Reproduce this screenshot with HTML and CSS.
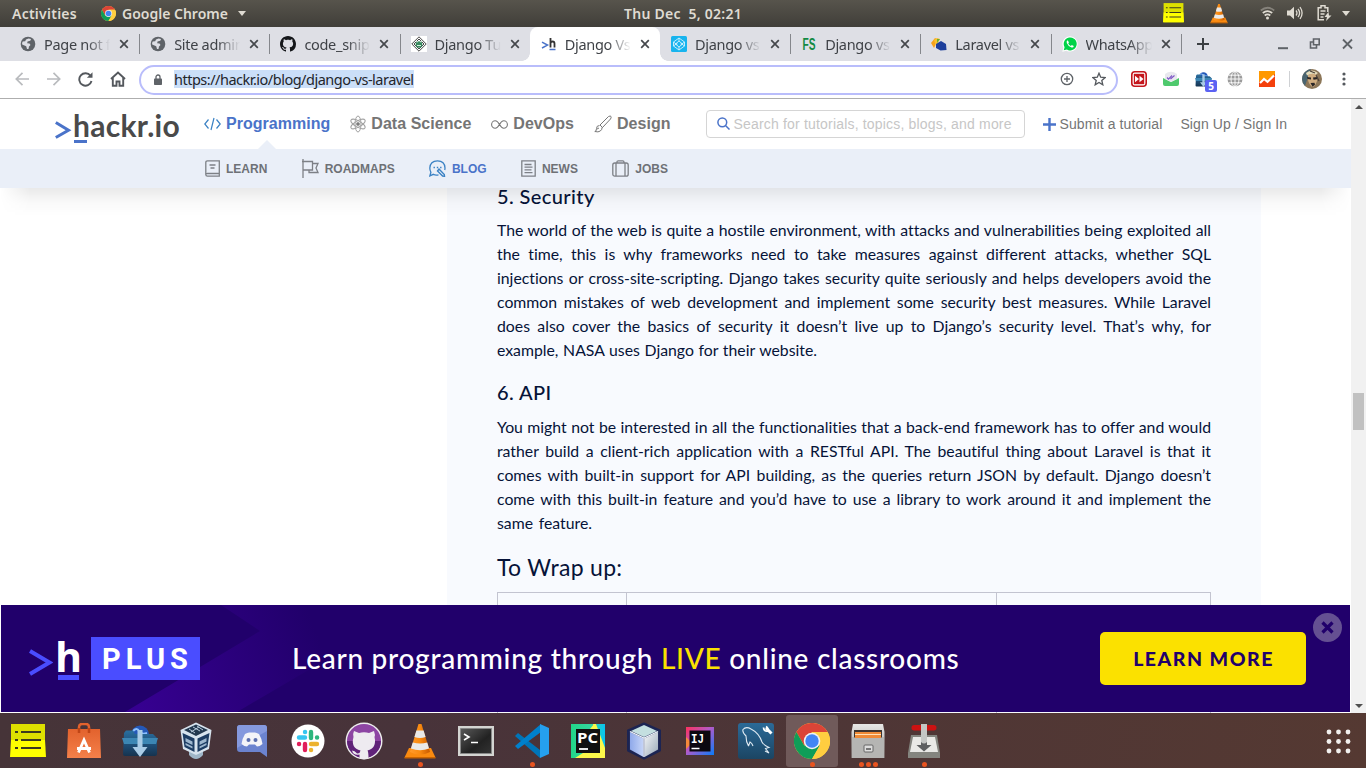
FILE: index.html
```html
<!DOCTYPE html>
<html lang="en">
<head>
<meta charset="utf-8">
<title>Django Vs Laravel</title>
<link rel="stylesheet" href="styles.css">
</head>
<body>
<svg class="defs" width="0" height="0">
  <defs>
    <linearGradient id="cone" x1="0" x2="1"><stop offset="0" stop-color="#ff9a2c"/><stop offset=".5" stop-color="#f98a10"/><stop offset="1" stop-color="#c85a00"/></linearGradient>
    <linearGradient id="grey" x1="0" x2="0" y1="0" y2="1"><stop offset="0" stop-color="#e8e8e6"/><stop offset="1" stop-color="#9a9a98"/></linearGradient>
    <linearGradient id="dark" x1="0" x2="1" y1="0" y2="1"><stop offset="0" stop-color="#5a5a5a"/><stop offset=".6" stop-color="#222"/><stop offset="1" stop-color="#333"/></linearGradient>
    <linearGradient id="orange" x1="0" x2="0" y1="0" y2="1"><stop offset="0" stop-color="#e2622d"/><stop offset="1" stop-color="#f5804a"/></linearGradient>
    <linearGradient id="folder" x1="0" x2="0" y1="0" y2="1"><stop offset="0" stop-color="#2a6f9f"/><stop offset=".6" stop-color="#1d4b74"/><stop offset="1" stop-color="#16334f"/></linearGradient>
    <linearGradient id="mysql" x1="0" x2="0" y1="0" y2="1"><stop offset="0" stop-color="#2b6a98"/><stop offset="1" stop-color="#1b4563"/></linearGradient>
    <linearGradient id="pyc" x1="0" x2="1"><stop offset="0" stop-color="#21d789"/><stop offset=".6" stop-color="#35d6a0"/><stop offset="1" stop-color="#07c3f2"/></linearGradient>
    <linearGradient id="ij" x1="0" x2="1" y1="0" y2="1"><stop offset="0" stop-color="#fe315d"/><stop offset=".45" stop-color="#b45ac8"/><stop offset="1" stop-color="#087cfa"/></linearGradient>
    <linearGradient id="cubeL" x1="0" x2="1"><stop offset="0" stop-color="#8fa9ea"/><stop offset="1" stop-color="#c6d5f8"/></linearGradient>
    <linearGradient id="cubeR" x1="0" x2="1" y1="0" y2="1"><stop offset="0" stop-color="#f4f6f8"/><stop offset="1" stop-color="#9aa9b8"/></linearGradient>
    <symbol id="chrome" viewBox="0 0 36 36">
      <circle cx="18" cy="18" r="18" fill="#fc4"/>
      <path d="M18 9h15.600A18 18 0 0 0 2.400 9L10.200 22.500Z" fill="#db4437"/>
      <path d="M2.400 9A18 18 0 0 0 18 36L25.800 22.500H10.200Z" fill="#0f9d58"/>
      <path d="M18 36A18 18 0 0 0 33.600 9H18L25.800 22.500Z" fill="#ffcd40"/>
      <circle cx="18" cy="18" r="8.300" fill="#f1f1f1"/><circle cx="18" cy="18" r="6.700" fill="#4285f4"/>
    </symbol>
    <symbol id="vlc" viewBox="0 0 32 36">
      <path d="M5 25h22l4.500 9.500h-31z" fill="#f98a10"/><path d="M.5 34h31v1.500h-31z" fill="#c96400"/>
      <path d="M14.500 1h3L26 29q-10 5-20 0z" fill="url(#cone)"/>
      <path d="M12.400 7.500h7.200l2 6.500q-5.600 2-11.200 0zM8.700 19.500q7.300 2 14.600 0l1.800 6q-9 3.600-18.200 0z" fill="#e9e9e9"/>
    </symbol>
    <symbol id="notes" viewBox="0 0 36 34">
      <path d="M1 0h34v33H1z" fill="#dde000"/><path d="M1 16h34l1 17H0z" fill="#ff0"/>
      <path d="M5 8h3M11 8h20M5 16h3M11 16h20M5 24h3M11 24h20" stroke="#3b3a20" stroke-width="1.800"/>
    </symbol>
    <symbol id="globe" viewBox="0 0 16 16">
      <circle cx="8" cy="8" r="7.300" fill="#5f6368"/>
      <path d="M8.500 2.500l2.500.5-.7 1.800-2.800.7-.3 1.700 2.300.2 1 1.600-1.500 1.500-.5 2.500H7l-.8-2.700L2.200 8.500q-.5-1.500.5-3l2.500-.3L6 3.500z" fill="#dedfe5"/>
    </symbol>
    <symbol id="close" viewBox="0 0 10 10"><path d="M1.200 1.200l7.600 7.600M8.800 1.200L1.200 8.800" stroke="#45484c" stroke-width="1.700"/></symbol>
    <symbol id="octocat" viewBox="0 0 16 16"><path d="M8 0C3.580 0 0 3.580 0 8c0 3.540 2.290 6.530 5.470 7.590.4.070.55-.17.55-.38 0-.19-.01-.82-.01-1.490-2.010.37-2.530-.49-2.690-.94-.09-.23-.48-.94-.82-1.130-.28-.15-.68-.52-.01-.53.63-.01 1.080.58 1.230.82.72 1.210 1.870.87 2.330.66.07-.52.28-.87.51-1.070-1.780-.2-3.640-.89-3.640-3.950 0-.87.31-1.590.82-2.150-.08-.2-.36-1.020.08-2.120 0 0 .67-.21 2.200.82.64-.18 1.320-.27 2-.27s1.360.09 2 .27c1.530-1.040 2.200-.82 2.200-.82.44 1.100.16 1.920.08 2.120.51.56.82 1.270.82 2.150 0 3.070-1.870 3.750-3.650 3.950.29.25.54.73.54 1.480 0 1.070-.01 1.930-.01 2.200 0 .21.15.46.55.38A8.010 8.010 0 0 0 16 8c0-4.420-3.580-8-8-8z"/></symbol>
    <symbol id="boxfolder" viewBox="0 0 36 32">
      <circle cx="18" cy="9.500" r="9" fill="#2458b8"/><path d="M11 6q4-4 6 0t8 2" stroke="#8cc0ff" stroke-width="2" fill="none"/>
      <path d="M2 8l2-2.500h7l2 3.500h18l4 4v16q0 2-2 2H3q-2 0-2-2z" fill="url(#folder)"/>
      <path d="M0 13h36l-2 6H2z" fill="#3c86b4"/>
      <path d="M15.500 5h5v17h5L18 32l-7.500-10h5z" fill="#a9cbe6"/>
    </symbol>
  </defs>
</svg>

<header class="topbar">
  <span class="activities">Activities</span>
  <svg class="top-chrome" width="15" height="15"><use href="#chrome"/></svg>
  <span class="app-name">Google Chrome</span>
  <i class="caret"></i>
  <span class="clock">Thu Dec &nbsp;5, 02:21</span>
  <div class="tray">
    <svg class="tray-notes" width="21" height="20"><use href="#notes"/></svg>
    <svg class="tray-vlc" width="18" height="21"><use href="#vlc"/></svg>
    <svg class="tray-wifi" width="15" height="14" viewBox="0 0 15 14" fill="none" stroke-width="1.700"><path d="M.8 4.500q6.700-5.500 13.400 0" stroke="#85827b"/><path d="M2.800 7q4.700-3.800 9.400 0M4.700 9.500q2.800-2.200 5.600 0" stroke="#dfdbd2"/><circle cx="7.500" cy="12" r="1.500" fill="#dfdbd2"/></svg>
    <svg class="tray-vol" width="16" height="14" viewBox="0 0 16 14"><path d="M0 4.500h3L7 .8v12.400L3 9.500H0z" fill="#dfdbd2"/><path d="M9 4.500q2 2.500 0 5M11 2.800q3.200 4.200 0 8.400M13 1q4.200 6 0 12" stroke="#dfdbd2" stroke-width="1.300" fill="none"/></svg>
    <svg class="tray-bat" width="15" height="16" viewBox="0 0 15 16" fill="none" stroke="#dfdbd2" stroke-width="1.500"><path d="M7 14.800H1.200V2.800H4V.8h4v2h2.800V7M3.500 6h5M3.500 9h4M3.500 12h3"/><path d="M11.500 7L7.500 12h2.500l-1 4 5.500-5.500H12z" fill="#dfdbd2" stroke="none"/></svg>
    <i class="caret"></i>
  </div>
</header>

<nav class="tabs">
  <div class="tab"><svg class="fav" width="16" height="16"><use href="#globe"/></svg><span class="title">Page not found</span><svg class="x" width="10" height="10"><use href="#close"/></svg></div>
  <div class="tab"><svg class="fav" width="16" height="16"><use href="#globe"/></svg><span class="title">Site administration</span><svg class="x" width="10" height="10"><use href="#close"/></svg></div>
  <div class="tab"><svg class="fav" width="16" height="16" fill="#15171a"><use href="#octocat"/></svg><span class="title">code_snippets</span><svg class="x" width="10" height="10"><use href="#close"/></svg></div>
  <div class="tab bare"><svg class="fav" width="16" height="16" viewBox="0 0 16 16"><path fill="#fff" d="M0 0h16v16H0z"/><path d="M8 .8L15.200 8 8 15.200.8 8zM8 3l5 5-5 5-5-5z" fill="none" stroke="#333" stroke-width=".9"/><circle cx="8" cy="8.500" r="3.300" fill="#3a8a60"/><path d="M5 5l2 1M11 5l-2 1M6 9.500h4" stroke="#d8f0df"/></svg><span class="title">Django Tutorial</span><svg class="x" width="10" height="10"><use href="#close"/></svg></div>
  <div class="tab active"><svg class="fav" width="16" height="16" viewBox="0 0 16 16" fill="none"><path d="M1 6.200l5.500 2.900L1 12" stroke="#4a73c9" stroke-width="1.500"/><path d="M9.500 2v9.500M9.500 7.500q0-2 2-2t2 2v4" stroke="#333" stroke-width="1.800"/><path d="M8.500 13.500h6" stroke="#4a73c9" stroke-width="1.500"/></svg><span class="title">Django Vs Laravel</span><svg class="x" width="10" height="10"><use href="#close"/></svg></div>
  <div class="tab"><svg class="fav" width="16" height="16" viewBox="0 0 16 16"><rect width="16" height="16" rx="1.500" fill="#18b4ee"/><path d="M8 2l5.500 4v4L8 14l-5.500-4V6zM8 5l3.500 3L8 11 4.500 8zM8 2v3M8 11v3M2.500 6l4 3M13.500 6l-4 3M2.500 10l4-3M13.500 10l-4-3" fill="none" stroke="#d4f3ff" stroke-width=".9"/></svg><span class="title">Django vs Laravel</span><svg class="x" width="10" height="10"><use href="#close"/></svg></div>
  <div class="tab"><svg class="fav" width="16" height="16" viewBox="0 0 16 16"><text x="1.500" y="14" class="fs" textLength="13" lengthAdjust="spacingAndGlyphs">FS</text></svg><span class="title">Django vs Laravel</span><svg class="x" width="10" height="10"><use href="#close"/></svg></div>
  <div class="tab"><svg class="fav" width="16" height="16" viewBox="0 0 16 16"><path d="M0 7l4-5 2 1-2 7-1 2z" fill="#f6a21c"/><path d="M3 4l3-2 3 1-4 7z" fill="#fbc02d"/><path d="M6 3l3 0-3 4z" fill="#6fae2f"/><path d="M5 8l5-3 5 3 .5 6-6 .5L5 12z" fill="#1d3f9c"/></svg><span class="title">Laravel vs Django</span><svg class="x" width="10" height="10"><use href="#close"/></svg></div>
  <div class="tab"><svg class="fav" width="16" height="16" viewBox="0 0 16 16"><path d="M.3 15.700l1.100-4A7.600 7.600 0 1 1 4.500 14.700z" fill="#fff"/><path d="M1.700 14.300l.9-3.100a6.500 6.500 0 1 1 2.300 2.300z" fill="#00d348"/><path d="M5.800 4.300q-1.700.8-1 2.700 1.400 3.500 4.800 4.500 1.900.3 2.200-1.600l-2-1-.9 1q-1.900-.7-2.700-2.500l.7-.9z" fill="#fff"/></svg><span class="title">WhatsApp Web</span><svg class="x" width="10" height="10"><use href="#close"/></svg></div>
  <svg class="newtab" width="12" height="12" viewBox="0 0 12 12"><path d="M6 0v12M0 6h12" stroke="#3c4043" stroke-width="2"/></svg>
  <svg class="winctl" width="76" height="12" viewBox="0 0 76 12" fill="none" stroke="#5f6368" stroke-width="1.600"><path d="M0 10.200h10" stroke-width="2"/><path d="M35.500 1h5.700v5.700h-5.700zM35.500 4h-3v6h6V7"/><path d="M65 1.500l9 9M74 1.500l-9 9" stroke-width="1.800"/></svg>
</nav>

<div class="toolbar">
  <svg class="navicons" width="114" height="16" viewBox="0 0 114 16" fill="none" stroke-width="1.700"><path d="M15 8H2.500M8.500 1.800L2.300 8l6.200 6.200" stroke="#b9bbbe"/><path d="M33 8h12.500M39.500 1.800L45.700 8l-6.200 6.200" stroke="#b9bbbe"/><path d="M76.500 4.800A6.200 6.200 0 1 0 77.500 10" stroke="#54585d" stroke-width="1.900"/><path d="M78.500 1.200v5.600h-5.600z" fill="#54585d"/><path d="M97 8l7-6.500L111 8M98.800 7v7.700h3.700V10.500h3v4.200h3.700V7" stroke="#54585d" stroke-width="1.900"/></svg>
  <div class="omnibox">
    <svg class="lock" width="8" height="11" viewBox="0 0 8 11"><path d="M2 5V3a2 2 0 0 1 4 0v2" stroke="#5f6368" stroke-width="1.300" fill="none"/><rect y="4.500" width="8" height="6.500" rx=".8" fill="#5f6368"/></svg>
    <span class="url">https://hackr.io/blog/django-vs-laravel</span>
    <svg class="zoomicon" width="14" height="14" viewBox="0 0 14 14" fill="none" stroke="#5f6368" stroke-width="1.300"><circle cx="7" cy="7" r="5.700"/><path d="M7 4v6M4 7h6"/></svg>
    <svg class="star" width="14" height="14" viewBox="0 0 14 14" fill="none" stroke="#54585d" stroke-width="1.300"><path d="M7 1.200l1.700 4 4.400.4-3.300 2.900 1 4.300L7 10.500l-3.800 2.300 1-4.300L.9 5.600l4.400-.4z"/></svg>
  </div>
  <div class="ext">
    <svg width="16" height="16" viewBox="0 0 16 16"><rect x=".8" y=".8" width="14.400" height="14.400" rx="3" fill="#fff" stroke="#c4161c" stroke-width="1.600"/><rect x="2.800" y="2.800" width="10.400" height="10.400" fill="#c4161c"/><path d="M4 4.700L8 8l-4 3.300zM8.500 4.700L12.500 8l-4 3.300z" fill="#fff"/></svg>
    <svg width="16" height="16" viewBox="0 0 16 16"><path d="M0 7l8 4 8-4v6q0 2-2 2H2q-2 0-2-2z" fill="#4fc96d"/><path d="M2 3q6-4.500 12 0v5l-6 3-6-3z" fill="#e8e8ee"/><path d="M4 6.500l1.500 1.600L9 4.500M7.500 8L11.500 4.500" stroke="#7d55c7" stroke-width="1.100" fill="none"/></svg>
    <span class="badged"><svg width="17" height="15"><use href="#boxfolder"/></svg><b>5</b></span>
    <svg width="16" height="16" viewBox="0 0 16 16" fill="none" stroke="#fff" stroke-width=".9"><circle cx="8" cy="8" r="7.500" fill="#9b9b9b" stroke="none"/><path d="M8 0v16M0 8h16M1.500 4.200h13M1.500 11.800h13"/><ellipse cx="8" cy="8" rx="4" ry="7.500"/></svg>
    <svg width="16" height="16" viewBox="0 0 16 16"><path d="M0 0h16v16H0z" fill="#ff9800"/><path d="M0 11l4.500-4 3 2.500L16 3v13H0z" fill="#f4400c"/><path d="M1 12l4-4 3.500 2.800L15 4.500" stroke="#fff" stroke-width="2.200" fill="none"/></svg>
    <i class="sep"></i>
    <svg class="avatar" width="20" height="20" viewBox="0 0 20 20"><circle cx="10" cy="10" r="10" fill="#8c7658"/><path d="M3 17A10 10 0 0 1 2 4q4-4 7-4L6 8z" fill="#4a6470"/><path d="M6 6q6-3 9 0v6q-2 6-5 6-4-4-4-8z" fill="#d0ad80"/><path d="M5 8l4 .5v2L5.500 10zM11 8.500l4.500-.5-.5 2.300-3.500.4zM8.500 14l4-.3.500 2-2.500 2z" fill="#2a2626"/><path d="M4 4q6-5 12 0l-2 1.500q-4-2-9 1z" fill="#e5dcbb"/><path d="M8 2l5 2M14 6l3 6" stroke="#4a4038" stroke-width="1.200"/></svg>
    <svg class="dots" width="4" height="14" viewBox="0 0 4 14" fill="#54585d"><circle cx="2" cy="2" r="1.600"/><circle cx="2" cy="7" r="1.600"/><circle cx="2" cy="12" r="1.600"/></svg>
  </div>
</div>

<main class="viewport">
  <div class="page">
    <header class="site">
      <div class="mainnav">
        <a class="logo"><svg width="18" height="20" viewBox="0 0 18 20"><path d="M.8 1.500l12.700 7.700L.8 16.500" fill="none" stroke="#4a73c9" stroke-width="3"/></svg><span class="word">hackr.io</span></a>
        <a class="topic on"><svg width="17" height="14" viewBox="0 0 17 14" fill="none" stroke="#3b82c4" stroke-width="1.200"><path d="M4.500 2.500L.8 7l3.700 4.500M12.500 2.500L16.200 7l-3.700 4.500M10 1L7 13"/></svg><span>Programming</span></a>
        <a class="topic"><svg width="16" height="18" viewBox="0 0 16 18" fill="none" stroke="#a2a2a2" stroke-width="1"><ellipse cx="8" cy="9" rx="3" ry="8"/><ellipse cx="8" cy="9" rx="3" ry="8" transform="rotate(60 8 9)"/><ellipse cx="8" cy="9" rx="3" ry="8" transform="rotate(120 8 9)"/><circle cx="8" cy="9" r="1.600" fill="#777"/></svg><span>Data Science</span></a>
        <a class="topic"><svg width="17" height="9" viewBox="0 0 17 9" fill="none" stroke="#777" stroke-width="1.100"><path d="M8.500 4.500C7 2 6 .8 4.300.8a3.700 3.700 0 0 0 0 7.400C6 8.200 7 7 8.500 4.500S11 .8 12.700.8a3.700 3.700 0 0 1 0 7.400C11 8.200 10 7 8.500 4.500z"/></svg><span>DevOps</span></a>
        <a class="topic"><svg width="18" height="18" viewBox="0 0 18 18" fill="none" stroke="#777" stroke-width="1"><path d="M6 10L14.500 1.500q2-1 2.500 0t-.5 2.500L8.500 12.500zM6 10l2.500 2.500M5.500 10.500q-3 0-3 3T.8 16.500q3.500 1 5.500-.5t1.700-3.500M3 14l2-1"/></svg><span>Design</span></a>
        <div class="search"><svg width="13" height="13" viewBox="0 0 13 13" fill="none" stroke="#4a73c9" stroke-width="1.500"><circle cx="5.300" cy="5.300" r="4.400"/><path d="M8.500 8.500l4 4"/></svg><span>Search for tutorials, topics, blogs, and more</span></div>
        <a class="link submit"><svg width="13" height="13" viewBox="0 0 13 13"><path d="M6.500 0v13M0 6.500h13" stroke="#4a73c9" stroke-width="2.400"/></svg><span>Submit a tutorial</span></a>
        <a class="link sign">Sign Up / Sign In</a>
        <i class="pointer"></i>
      </div>
      <div class="subnav">
        <a><svg width="15" height="17" viewBox="0 0 15 17" fill="none" stroke="#7d8086" stroke-width="1.300"><path d="M14.300 13.500V.8H2.500Q.8.800.8 2.500v12q0 1.700 1.700 1.700h11.800v-2.700H2.500Q.8 13.500.8 15M4.500 5h6M5.500 8h4"/></svg><span>LEARN</span></a>
        <a><svg width="17" height="19" viewBox="0 0 17 19" fill="none" stroke="#7d8086" stroke-width="1.300"><path d="M1 0v19M0 2.500h10.500V11H1M10.500 4.500H16l-2 4.500 2 4.500H7V11"/></svg><span>ROADMAPS</span></a>
        <a class="on"><svg width="17" height="17" viewBox="0 0 17 17" fill="none" stroke="#3b82c4" stroke-width="1.300"><path d="M9.500 14.800Q6.500 15.500 4.300 14.300L.9 15.800l1-3.500Q.8 10.500.8 8 1.200.8 8.500.8T16 8q0 1-.3 2"/><path d="M4.500 7.500h1.400M7.800 7.500h1.400M11.100 7.500h1.400"/><path d="M10 9l5.300 5.500.2 1.800-1.900-.2L8.500 11z" stroke-width="1.400"/></svg><span>BLOG</span></a>
        <a><svg width="15" height="17" viewBox="0 0 15 17" fill="none" stroke="#7d8086" stroke-width="1.300"><path d="M.8.800h13.400v15.400H.8zM3.500 4.500h7M3.500 7.200h8M3.500 9.900h7M3.500 12.600h8"/></svg><span>NEWS</span></a>
        <a><svg width="17" height="17" viewBox="0 0 17 17" fill="none" stroke="#7d8086" stroke-width="1.300"><rect x=".8" y="3" width="15.400" height="13.200" rx="2"/><path d="M5 3V2q0-1.200 1.200-1.200h4.600Q12 .8 12 2v1M4 3v13M13 3v13"/></svg><span>JOBS</span></a>
      </div>
    </header>
    <article class="post">
      <h3 class="h5">5. Security</h3>
      <p>
        <span>The world of the web is quite a hostile environment, with attacks and vulnerabilities being exploited all</span>
        <span>the time, this is why frameworks need to take measures against different attacks, whether SQL</span>
        <span>injections or cross-site-scripting. Django takes security quite seriously and helps developers avoid the</span>
        <span>common mistakes of web development and implement some security best measures. While Laravel</span>
        <span>does also cover the basics of security it doesn’t live up to Django’s security level. That’s why, for</span>
        <span class="e1">example, NASA uses Django for their website.</span>
      </p>
      <h3 class="h6">6. API</h3>
      <p>
        <span>You might not be interested in all the functionalities that a back-end framework has to offer and would</span>
        <span>rather build a client-rich application with a RESTful API. The beautiful thing about Laravel is that it</span>
        <span>comes with built-in support for API building, as the queries return JSON by default. Django doesn’t</span>
        <span>come with this built-in feature and you’d have to use a library to work around it and implement the</span>
        <span class="e2">same feature.</span>
      </p>
      <h2>To Wrap up:</h2>
      <div class="compare"><i></i><i></i><i></i></div>
    </article>
    <aside class="banner">
      <svg class="art" width="400" height="107" viewBox="0 0 400 107"><defs><linearGradient id="ray" gradientUnits="userSpaceOnUse" x1="140" y1="107" x2="320" y2="40"><stop offset="0" stop-color="#360090"/><stop offset="1" stop-color="#21006b"/></linearGradient></defs><path d="M220 0l39 26L124 107h112L340 46V0z" fill="url(#ray)"/></svg>
      <div class="plus-logo"><svg width="24" height="28" viewBox="0 0 24 28"><path d="M1 2l19.500 11.500L1 25" fill="none" stroke="#4a4dff" stroke-width="4"/></svg><b class="h">h</b><b class="plus">PLUS</b></div>
      <div class="pitch">Learn programming through <em>LIVE</em> online classrooms</div>
      <button class="cta">LEARN MORE</button>
      <svg class="dismiss" width="29" height="29" viewBox="0 0 29 29"><circle cx="14.500" cy="14.500" r="14.500" fill="#655092"/><path d="M9.500 9.500l10 10M19.500 9.500l-10 10" stroke="#21006b" stroke-width="3.200"/></svg>
    </aside>
  </div>
  <div class="scrollbar"><i class="up"></i><i class="thumb"></i><i class="down"></i></div>
</main>

<footer class="dock">
  <div class="app"><svg width="36" height="34"><use href="#notes"/></svg></div>
  <div class="app"><svg width="34" height="36" viewBox="0 0 34 36"><path d="M12 10V4q0-3 3-3h4q3 0 3 3v6" fill="none" stroke="#e2622d" stroke-width="2.500"/><path d="M1 6h32l1 29H0z" fill="url(#orange)"/><path d="M12 5v5M22 5v5" stroke="#bf4516" stroke-width="2.500"/><path d="M11.500 29.500L17 17l5.500 12.500M10 25.500h14" fill="none" stroke="#fff" stroke-width="2.800"/></svg></div>
  <div class="app"><svg width="36" height="32"><use href="#boxfolder"/></svg></div>
  <div class="app"><svg width="32" height="38" viewBox="0 0 32 38"><path d="M9 27h14v6q-7 8-14 0z" fill="#9fb6c8"/><path d="M16 .5L31.500 8 29 27l-13 6L3 27 .5 8z" fill="#d7e3ee"/><path d="M16 2.500L28 8l-12 6L4 8z" fill="#22384f"/><path d="M9 7l6 4M13 5l7 4M17 4l6 4M11 10l8-5" stroke="#b9cbdc" stroke-width="1"/><path d="M2.500 11l12 5.500v13.500L4.500 25zM29.500 11l-12 5.500v13.500l10-5z" fill="#1c3c63"/><path d="M5.500 16l7 3.500v3.500l-7-3.500zM5.500 21l7 3.500v2l-7-3.500zM26.500 16l-7 3.500v3.500l7-3.500zM26.500 21l-7 3.500v2l7-3.500z" fill="#9db6ce"/></svg></div>
  <div class="app"><svg width="30" height="34" viewBox="0 0 30 34"><path d="M3 1h24q3 0 3 3v29l-7-5H3q-3 0-3-3V4q0-3 3-3z" fill="#6b83cf"/><path d="M3 1h24q3 0 3 3v3L0 24V4q0-3 3-3z" fill="#8599de"/><path d="M8 10q3-2 5-1.500h4q2-.5 5 1.500 3 5 3.500 10-3 2.500-5.500 2.500L18 20.500h-6L10 22.500Q7.500 22.500 4.500 20q.5-5 3.500-10z" fill="#f4f4f8"/><circle cx="11.500" cy="16" r="2" fill="#5b6eae"/><circle cx="18.500" cy="16" r="2" fill="#5b6eae"/></svg></div>
  <div class="app"><svg width="34" height="34" viewBox="0 0 34 34" stroke-linecap="round" stroke-width="4.400" fill="none"><circle cx="17" cy="17" r="16.500" fill="#fff" stroke="none"/><path d="M8 13.500h6M14 8h.1" stroke="#36c5f0"/><path d="M20 8v6M26 13.500h.1" stroke="#2eb67d"/><path d="M26 20h-6M20 26h.1" stroke="#ecb22e"/><path d="M14 26v-6M8 20h.1" stroke="#e01e5a"/></svg></div>
  <div class="app"><svg width="38" height="38" viewBox="0 0 38 38"><circle cx="19" cy="19" r="18.500" fill="#eee"/><circle cx="19" cy="19" r="17" fill="#8d45a3"/><path d="M2 19a17 17 0 0 0 34 0z" fill="#602379"/><path d="M9 9l5 2q5-1.500 10 0l5-2q1.500 4 .5 6 2.500 11-7 13.500 1 1.500 1 8-4.500 1.500-9 0v-4q-6 1.500-7.500-4 3 .5 4 2t3.500.5l1-2.500Q5.500 26 8.500 15q-1-3 .5-6z" fill="#eeebf0"/></svg></div>
  <div class="app dot1"><svg width="32" height="36"><use href="#vlc"/></svg></div>
  <div class="app"><svg width="36" height="30" viewBox="0 0 36 30"><path d="M0 0h36v30H0z" fill="#d4d5d2"/><path d="M2.500 2.500h31v25h-31z" fill="url(#dark)" stroke="#888"/><path d="M6 8l5 3-5 3M13 16.500h7" fill="none" stroke="#fff" stroke-width="1.600"/></svg></div>
  <div class="app dot1"><svg width="34" height="34" viewBox="0 0 34 34"><path d="M0 12l3-3 22 17V34z" fill="#0075b8"/><path d="M0 22l3 3L26 8V0z" fill="#0080cc"/><path d="M25 0l9 4v26l-9 4z" fill="#25a0ef"/></svg></div>
  <div class="app"><svg width="34" height="34" viewBox="0 0 34 34"><path d="M0 0h34v34H0z" fill="url(#pyc)"/><path d="M22 0l3 0 9 24v10H4l8-5 13-5zM19 5l4-5 3 5z" fill="#fcf84a"/><path d="M5 5h24v24H5z" fill="#111"/><path d="M8 25h9" stroke="#fff" stroke-width="1.800"/><text x="6" y="18.500" class="pc" textLength="21" lengthAdjust="spacingAndGlyphs">PC</text></svg></div>
  <div class="app"><svg width="36" height="38" viewBox="0 0 36 38"><path d="M18 1.500L34 8.500v20L18 36.500 2 28.500v-20z" fill="#222b5a" stroke="#1c2452" stroke-width="2" stroke-linejoin="round"/><path d="M18 3l13 6-13 6L5 9z" fill="#c4dfe0"/><path d="M4 10l13.500 6.500V35L4 27.500z" fill="url(#cubeL)"/><path d="M32 10l-13.500 6.500V35L32 27.500z" fill="url(#cubeR)"/><path d="M4 9.500l14 6.500 14-6.500M18 16v19" fill="none" stroke="#f2f6fc" stroke-width="1.200"/></svg></div>
  <div class="app"><svg width="28" height="28" viewBox="0 0 28 28"><path d="M0 0h28v28H0z" fill="url(#ij)"/><path d="M0 10l6 6-6 6z" fill="#f58a3c"/><path d="M3.500 3.500h21v21h-21z" fill="#0c0810"/><path d="M5.500 21.500h8" stroke="#fff" stroke-width="1.500"/><text x="5" y="15.500" class="ij" textLength="13" lengthAdjust="spacingAndGlyphs">IJ</text></svg></div>
  <div class="app"><svg width="36" height="36" viewBox="0 0 36 36"><rect width="36" height="36" rx="3" fill="url(#mysql)"/><path d="M10.500 23q-2.500-4-2.500-10-4-4-3-6.500Q8 3 13 6q8 4 11 13 1.500 3 7 5.500l-3.500 1L31 30l-4-2M10.500 23l1.500-4q2 1 3 4" fill="none" stroke="#dfeaf2" stroke-width="1.100"/><path d="M28 5l3 3M31 8l2.500 2.500" stroke="#fff" stroke-width="3"/><path d="M25.500 4.500q.5 4.500 4.500 3.500.5-3-2-4.500" stroke="#fff" stroke-width="1.800" fill="none"/></svg></div>
  <div class="app focus dot1"><svg width="36" height="36"><use href="#chrome"/></svg></div>
  <div class="app dot3"><svg width="34" height="36" viewBox="0 0 34 36"><path d="M2 1h30l1.500 8v26H.5V9z" fill="url(#grey)"/><path d="M3 7h28v8H3z" fill="#3c3330"/><path d="M4 9h26v6H4z" fill="#ef8a36"/><path d="M4 11.500h26" stroke="#ffe1b8"/><path d="M3.500 15h27v-1H33v21H1V14h2.500z" fill="#b5b5b3"/><rect x="13" y="22" width="9" height="7" rx="1" fill="#ddd" stroke="#666"/><path d="M15 26h5" stroke="#555" stroke-width="1.500"/></svg></div>
  <div class="app dot1"><svg width="32" height="36" viewBox="0 0 32 36"><path d="M3 12h26l3 18v5H0v-5z" fill="#84857f"/><path d="M5 14h22l3 15H2z" fill="#e9e9e6"/><rect x="3.500" y="2" width="25" height="5.500" rx="2.700" fill="#cc1212"/><path d="M13 2h6v20h4.500L16 28.500 8.500 22H13z" fill="#5d5f60"/><path d="M13 1h6v18q-3 3-6 0z" fill="#c4c6c4"/></svg></div>
  <svg class="grid" width="25" height="25" viewBox="0 0 25 25" fill="#f2f0ee"><circle cx="3" cy="3" r="2.400"/><circle cx="12.500" cy="3" r="2.400"/><circle cx="22" cy="3" r="2.400"/><circle cx="3" cy="12.500" r="2.400"/><circle cx="12.500" cy="12.500" r="2.400"/><circle cx="22" cy="12.500" r="2.400"/><circle cx="3" cy="22" r="2.400"/><circle cx="12.500" cy="22" r="2.400"/><circle cx="22" cy="22" r="2.400"/></svg>
</footer>
</body>
</html>
```

FILE: styles.css
```css
* { box-sizing: border-box; }
body { margin: 0; width: 1366px; height: 768px; overflow: hidden; display: flex; flex-direction: column; font-family: "Noto Sans", sans-serif; }
svg { display: block; flex: none; }
.defs { position: absolute; }

/* desktop top bar */
.topbar { height: 27px; flex: none; display: flex; align-items: center; position: relative; background: linear-gradient(#57544c, #403e39); color: #dfdbd2; font: 600 14px/27px "Noto Sans", sans-serif; padding-left: 12px; }
.activities { width: 89px; letter-spacing: .25px; }
.top-chrome { margin-right: 6px; }
.app-name { width: 111px; white-space: nowrap; }
.caret { border: 4.500px solid transparent; border-top: 5px solid #dfdbd2; border-bottom: 0; margin-left: 5px; }
.clock { position: absolute; left: 624px; white-space: pre; letter-spacing: .25px; }
.tray { margin-left: auto; display: flex; align-items: center; padding-right: 16px; }
.tray-notes { margin-right: 26px; margin-top: -1px; }
.tray-vlc { margin-right: 32px; margin-top: -1px; }
.tray-wifi { margin-right: 12px; margin-top: -1px; }
.tray-vol { margin-right: 14px; margin-top: -1px; }
.tray-bat { margin-right: 5px; margin-top: -1px; }

/* tab strip */
.tabs { height: 34px; flex: none; display: flex; align-items: center; background: #dedfe5; padding-left: 10px; }
.tab { width: 130.200px; height: 34px; flex: none; display: flex; align-items: center; padding: 0 0 0 10px; position: relative; font-size: 14.500px; color: #3f4247; }
.tab::after { content: ""; position: absolute; right: 0; top: 7px; width: 1px; height: 20px; background: #85878c; }
.tab.bare::after, .tab.active::after { display: none; }
.tab.active { background: #fff; border-radius: 8px 8px 0 0; left: -1px; padding-left: 11px; }
.tab.active::before { content: ""; position: absolute; left: -8px; right: -8px; bottom: 0; height: 8px; background: radial-gradient(circle at 0 0, transparent 7.500px, #fff 8px) 0 0 / 8px 8px no-repeat, radial-gradient(circle at 100% 0, transparent 7.500px, #fff 8px) 100% 0 / 8px 8px no-repeat; }
.fav { width: 16px; margin-right: 8px; }
.fs { font: 700 16px "Liberation Sans", sans-serif; fill: #128a43; }
.title { width: 66px; margin: -1px 9px 0 0; overflow: hidden; white-space: nowrap; letter-spacing: -.3px; -webkit-mask-image: linear-gradient(90deg, #000 65%, transparent 100%); mask-image: linear-gradient(90deg, #000 65%, transparent 100%); }
.newtab { margin-left: 15px; }
.winctl { margin-left: 69px; }

/* toolbar */
.toolbar { height: 38px; flex: none; display: flex; align-items: center; background: #fff; border-bottom: 1px solid #aeaeae; padding-left: 14px; }
.navicons { margin-top: -2px; }
.omnibox { margin-left: 11px; width: 979px; height: 30px; border: 2px solid #b9bdfb; border-radius: 15px; display: flex; align-items: center; padding-left: 13px; }
.lock { margin-top: -1px; }
.url { margin: -2px 0 0 12px; background: #cbdff8; font-size: 14.500px; line-height: 18px; color: #23262b; width: 240px; white-space: nowrap; letter-spacing: -.5px; }
.zoomicon { margin: -2px 0 0 646px; }
.star { margin: -2px 0 0 18px; }
.ext { display: flex; align-items: center; padding-left: 13px; margin-top: -1px; }
.ext > * { margin-right: 16px; }
.ext > .badged { position: relative; margin-right: 15px; }
.badged b { position: absolute; left: 10px; top: 8px; width: 12px; height: 12px; background: #5b62f3; border-radius: 2px; color: #fff; font: 700 10px/12px "Noto Sans", sans-serif; text-align: center; }
.ext > .sep { width: 1px; height: 16px; background: #cfd1d4; margin: 0 12px 0 -2px; }
.ext .dots { margin: 0 0 0 4px; }

/* browser viewport */
.viewport { height: 614px; flex: none; display: flex; background: #fff; }
.page { width: 1351px; height: 614px; position: relative; overflow: hidden; }
.scrollbar { width: 15px; background: #f1f1f1; display: flex; flex-direction: column; align-items: center; padding: 6px 0; }
.up, .down { border: 4px solid transparent; }
.up { border-bottom: 4px solid #505050; border-top: 0; }
.down { border-top: 4px solid #505050; border-bottom: 0; margin-top: auto; margin-bottom: -1px; }
.thumb { width: 11px; height: 37px; background: #c1c1c1; margin-top: 284px; }

/* site header */
.site { position: relative; z-index: 2; font-family: "Liberation Sans", Arial, sans-serif; }
.site::after { content: ""; display: block; height: 28px; margin-bottom: -28px; background: linear-gradient(rgba(0,0,0,.085), rgba(0,0,0,.025) 50%, transparent); -webkit-mask-image: linear-gradient(90deg, transparent, #000 30px, #000 calc(100% - 30px), transparent); mask-image: linear-gradient(90deg, transparent, #000 30px, #000 calc(100% - 30px), transparent); }
.mainnav { height: 50px; display: flex; align-items: center; background: #fff; padding-left: 55px; position: relative; }
.logo { display: flex; width: 149px; align-items: center; padding-top: 1px; }
.logo svg { margin-top: 12px; }
.word { font: 700 30px/34px Lato, sans-serif; color: #4a4a4a; position: relative; letter-spacing: .3px; }
.word::after { content: ""; position: absolute; left: 1px; bottom: -1px; width: 13px; height: 3px; background: #4a73c9; }
.topic { display: flex; align-items: center; gap: 5px; color: #757575; font-weight: 700; font-size: 16px; margin-right: 20px; white-space: nowrap; letter-spacing: .03px; }
.on.on { color: #4a73c9; }
.search { width: 319px; height: 28px; border: 1px solid #d5d5d5; border-radius: 4px; margin-left: 15px; display: flex; align-items: center; padding-left: 10px; gap: 5px; color: #c6c6c6; font-size: 14px; letter-spacing: .11px; white-space: nowrap; }
.search svg { margin-top: -1px; }
.search span { margin-left: -1px; letter-spacing: .18px; }
.link { color: #757575; font-size: 14px; letter-spacing: .1px; display: flex; align-items: center; gap: 4px; margin-left: 18px; white-space: nowrap; }
.pointer { position: absolute; left: 258px; bottom: 0; border: 9px solid transparent; border-top: 0; border-bottom-color: #eaeff8; }
.subnav { height: 39px; background: #eaeff8; display: flex; align-items: center; padding-left: 205px; }
.subnav a { display: flex; align-items: center; gap: 6px; margin-right: 34.300px; color: #6e7176; font-weight: 700; font-size: 12px; }

/* article */
.post { margin-left: 447px; width: 814px; height: 525px; background: #f8fafe; padding: 0 50px; color: #061338; font-family: Lato, sans-serif; font-variant-ligatures: none; }
.post h3 { font-size: 20px; line-height: 26px; font-weight: 500; letter-spacing: .4px; }
.post .h5 { height: 26px; line-height: 17px; margin: 0 0 4px; }
.post .h6 { margin: 18px 0 9px; line-height: 24px; height: 26px; }
.post h2 { margin: 16px 0 9px; font-size: 23px; line-height: 32px; font-weight: 400; letter-spacing: .3px; }
.post p { margin: 0; font-size: 15.800px; }
.post p span { display: block; height: 24px; line-height: 24px; white-space: nowrap; text-align: justify; text-align-last: justify; }
.post p .e1 { width: 320px; }
.post p .e2 { width: 95px; }
.compare { height: 121px; display: grid; grid-template-columns: 129px 370px 215px; border-top: 1px solid #c3c4d0; }
.compare i { border-left: 1px solid #c3c4d0; }
.compare i:last-child { border-right: 1px solid #c3c4d0; }

/* promo banner over the page */
.banner { position: absolute; z-index: 3; left: 1px; right: 1px; bottom: 1px; height: 107px; background: #21006b; display: flex; align-items: center; font-family: Lato, sans-serif; color: #fff; }
.art { position: absolute; left: 0; top: 0; }
.plus-logo { position: relative; display: flex; align-items: center; padding-left: 28px; width: 291px; height: 107px; }
.plus-logo svg { margin-top: 8px; }
.h { font: 700 41px/46px "Noto Sans", sans-serif; width: 21px; margin: -1px 0 0 5px; height: 43px; border-bottom: 5px solid #4a4dff; display: flex; align-items: center; justify-content: center; }
.plus { margin: -1px 0 0 12px; background: #4a4dff; width: 109px; height: 43px; font: 700 29px/44px Roboto, sans-serif; letter-spacing: 5px; padding-left: 11px; }
.pitch { position: relative; width: 808px; margin-top: -2px; font-size: 28px; font-weight: 500; white-space: nowrap; letter-spacing: .72px; }
.pitch em { font-style: normal; color: #fbe100; }
.cta { width: 206px; height: 53px; border: 0; border-radius: 5px; background: #fbe100; color: #21006b; font: 900 19.500px/53px Lato, sans-serif; letter-spacing: 1.500px; padding: 0 0 0 1px; }
.dismiss { margin: 0 0 62px 7px; }

/* dock */
.dock { height: 55px; flex: none; display: flex; background: linear-gradient(100deg, #463438, #48333a 30%, #4c3537 50%, #553932); }
.app { width: 56px; height: 55px; display: flex; align-items: center; justify-content: center; position: relative; padding-top: 1px; }
.app svg { position: relative; }
.focus::before { content: ""; position: absolute; left: 2px; top: 2px; width: 52px; height: 52px; border-radius: 3px; background: #705a5a; }
.dot1::after, .dot3::after { content: ""; position: absolute; left: 25.500px; top: 49px; width: 5px; height: 5px; border-radius: 50%; background: #e95420; }
.dot3::after { box-shadow: -7px 0 #e95420, 7px 0 #e95420; }
.pc { font: 700 15px "Open Sans", sans-serif; fill: #fff; }
.ij { font: 700 12px "Liberation Mono", monospace; fill: #fff; }
.grid { margin: 16px 0 0 374px; }
```
